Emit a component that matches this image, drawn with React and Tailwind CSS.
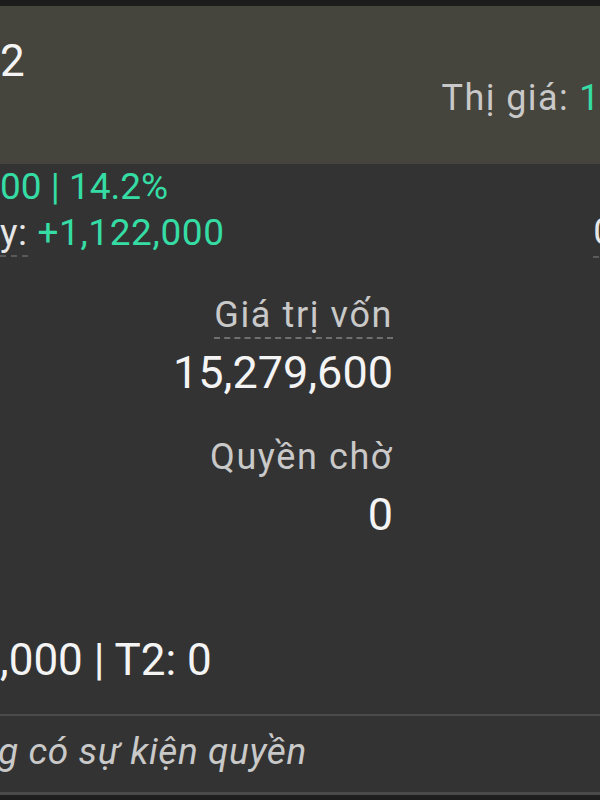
export default function App() {
  return (
    <div className="h-[800px] w-[600px] overflow-hidden bg-[#1e1e1e] font-['Roboto',sans-serif]">
      <div className="h-[6px] bg-[#1c1c1c]" />
      <div className="flex h-[158px] items-start justify-between bg-[#46453d]">
        <div className="mt-[31px] text-[44px] leading-[48px] text-[#f4f4f4]">2</div>
        <div className="-mr-[1px] mt-[71px] text-[36px] leading-[42px] tracking-[1.4px] text-[#c9c9c9]">
          Thị giá: <span className="text-[#35dca4]">1</span>
        </div>
      </div>

      <div className="h-[550px] bg-[#333333]">
        <div className="flex">
          <div className="w-[393px]">
            <div className="pt-[3px] text-[37px] leading-[40px] text-[#35dca4]">00 | 14.2%</div>
            <div className="mt-[6px] text-[37px] leading-[40px] tracking-[0.6px] text-[#e6e6e6]">
              <span className="inline-block border-b-2 border-dashed border-[#5a5a5a] pb-[4px] leading-[36px]">y:</span>{' '}
              <span className="text-[#35dca4]">+1,122,000</span>
            </div>

            <div className="mt-[38px] flex flex-col items-end">
              <div className="border-b-2 border-dashed border-[#6f6f6f] pb-[2px] text-[36px] leading-[40px] tracking-[1.6px] text-[#c9c9c9]">
                Giá trị vốn
              </div>
              <div className="mt-[10px] text-[45px] leading-[48px] text-[#f4f4f4]">15,279,600</div>
              <div className="mt-[40px] text-[36px] leading-[40px] tracking-[1.6px] text-[#c9c9c9]">Quyền chờ</div>
              <div className="mt-[14px] text-[45px] leading-[48px] text-[#f4f4f4]">0</div>
            </div>
          </div>
          <div className="ml-auto pt-[48px]">
            <div className="-mr-[14px] border-b-2 border-dashed border-[#5a5a5a] pb-[4px] text-[37px] leading-[40px] text-[#e6e6e6]">
              0
            </div>
          </div>
        </div>

        <div className="mt-[97px] text-[44px] leading-[48px] text-[#f4f4f4]">,000 | T2: 0</div>
      </div>

      <div className="h-[2px] bg-[#4a4a4a]" />
      <div className="flex h-[76px] items-center bg-[#333333] pb-[4px] text-[37px] italic tracking-[0.6px] text-[#c9c9c9]">
        <span className="-ml-[2px]">g có sự kiện quyền</span>
      </div>
      <div className="h-[3px] bg-[#4a4a4a]" />
    </div>
  );
}
